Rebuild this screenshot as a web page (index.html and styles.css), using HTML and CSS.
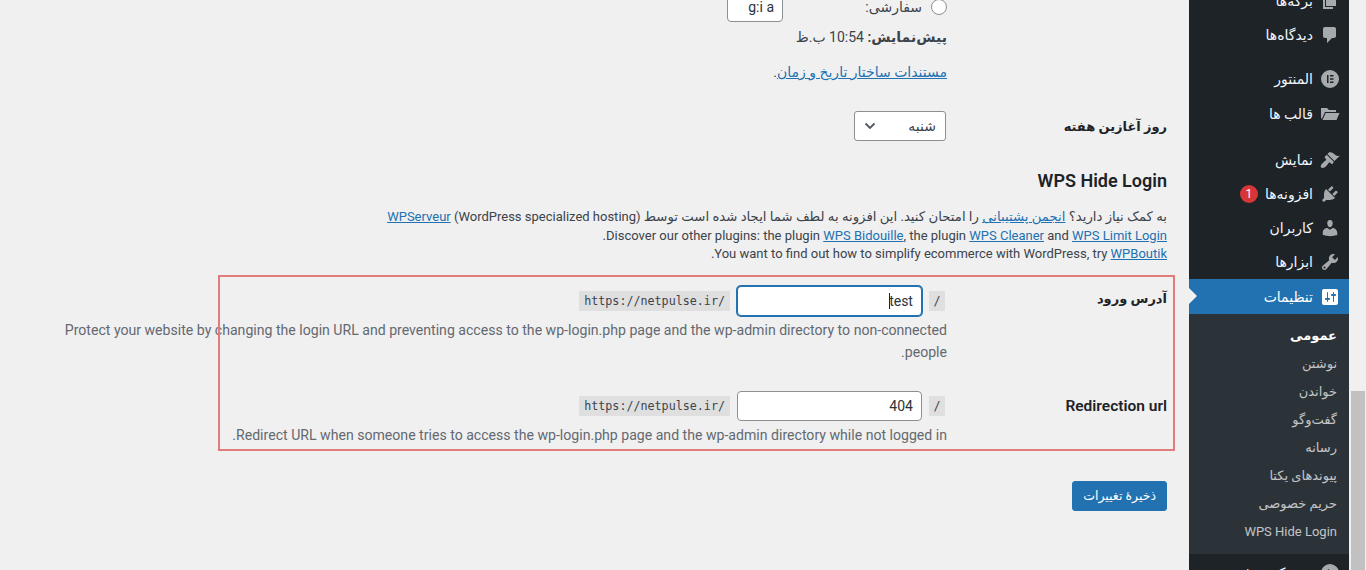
FILE: index.html
```html
<!DOCTYPE html>
<html lang="fa" dir="rtl">
<head>
    <meta charset="UTF-8">
    <title>تنظیمات عمومی</title>
    <link rel="stylesheet" href="styles.css">
</head>
<body>
    <div class="scrollbar"><div class="scrollbar-thumb"></div></div>

    <aside class="sidebar">
        <ul class="menu">
            <li class="menu-item first">
                <svg class="menu-icon" viewBox="0 0 20 20"><path d="M6 15V2h10v13H6zm-1 1h8v2H3V5h2v11z"/></svg>
                <span>برگه‌ها</span>
            </li>
            <li class="menu-item">
                <svg class="menu-icon" viewBox="0 0 20 20"><path d="M5 2h9c1.1 0 2 .9 2 2v7c0 1.1-.9 2-2 2h-2l-5 5v-5H5c-1.1 0-2-.9-2-2V4c0-1.1.9-2 2-2z"/></svg>
                <span>دیدگاه‌ها</span>
            </li>
            <li class="menu-sep"></li>
            <li class="menu-item spaced">
                <svg class="menu-icon" viewBox="0 0 20 20"><path fill-rule="evenodd" d="M10 1a9 9 0 1 0 0 18 9 9 0 0 0 0-18zM7 6h1.5v8H7zm3 0h3.5v1.5H10zm0 3.2h3.5v1.5H10zm0 3.3h3.5V14H10z"/></svg>
                <span>المنتور</span>
            </li>
            <li class="menu-item">
                <svg class="menu-icon" viewBox="0 0 20 20"><path d="M1 4h6l2 2h7v2H5L2 14.5H1zM5.7 9H19.5l-3 7H2.5z"/></svg>
                <span>قالب ها</span>
            </li>
            <li class="menu-sep wide"></li>
            <li class="menu-item">
                <svg class="menu-icon" viewBox="0 0 20 20"><path d="M14.48 11.06L7.41 3.99l1.5-1.5c.5-.56 2.3-.47 3.51.32 1.21.8 1.43 1.28 2.91 2.1 1.18.64 2.45 1.26 4.45.85zm-.71.71L6.7 4.7 4.93 6.47c-.39.39-.39 1.02 0 1.41l1.06 1.06c.39.39.39 1.03 0 1.42-.6.6-1.43 1.11-2.21 1.69-.35.26-.7.53-1.01.84C1.43 13.73 0 16.3 1.2 17.5c1.2 1.2 3.77-.23 5.11-1.57.31-.31.58-.66.84-1.01.58-.78 1.09-1.61 1.69-2.21.39-.39 1.03-.39 1.42 0l1.06 1.06c.39.39 1.02.39 1.41 0z"/></svg>
                <span>نمایش</span>
            </li>
            <li class="menu-item">
                <svg class="menu-icon" viewBox="0 0 20 20"><path d="M13.11 4.36L9.87 7.6 8 5.73l3.24-3.24c.35-.34 1.05-.2 1.56.32.52.51.66 1.21.31 1.55zm-8 1.77l.91-1.12 9.01 9.01-1.19.84c-.71.71-2.63 1.16-3.82 1.16H6.14L4.9 17.26c-.59.59-1.54.59-2.12 0-.59-.58-.59-1.53 0-2.12l1.24-1.24v-3.88c0-1.13.4-3.19 1.09-3.89zm7.26 3.97l3.24-3.24c.34-.35 1.04-.21 1.55.31.52.51.66 1.21.31 1.55l-3.24 3.25z"/></svg>
                <span>افزونه‌ها</span>
                <span class="badge">1</span>
            </li>
            <li class="menu-item">
                <svg class="menu-icon" viewBox="0 0 20 20"><path d="M10 9.25c-2.27 0-2.73-3.44-2.73-3.44C7 4.02 7.82 2 9.97 2c2.16 0 2.98 2.02 2.71 3.81 0 0-.41 3.44-2.68 3.44zm0 2.57L12.72 10c2.39 0 4.52 2.33 4.52 4.53v2.49s-3.65 1.13-7.24 1.13c-3.65 0-7.24-1.13-7.24-1.13v-2.49c0-2.25 1.94-4.48 4.47-4.48z"/></svg>
                <span>کاربران</span>
            </li>
            <li class="menu-item">
                <svg class="menu-icon" viewBox="0 0 20 20"><path d="M16.68 9.77c-1.34 1.34-3.3 1.67-4.95.99l-5.41 6.52c-.99.99-2.59.99-3.58 0s-.99-2.59 0-3.57l6.52-5.42c-.68-1.65-.35-3.61.99-4.95 1.28-1.28 3.12-1.62 4.72-1.06l-2.89 2.89 2.82 2.82 2.86-2.87c.53 1.58.18 3.39-1.08 4.67zM3.81 16.21c.4.39 1.04.39 1.43 0 .4-.4.4-1.04 0-1.43-.39-.4-1.03-.4-1.43 0-.39.39-.39 1.03 0 1.43z"/></svg>
                <span>ابزارها</span>
            </li>
            <li class="menu-item active">
                <svg class="menu-icon" viewBox="0 0 20 20"><path d="M18 16V4c0-1.1-.9-2-2-2H4c-1.1 0-2 .9-2 2v12c0 1.1.9 2 2 2h12c1.1 0 2-.9 2-2zM8 11h1c.55 0 1 .45 1 1s-.45 1-1 1H8v1.5c0 .28-.22.5-.5.5s-.5-.22-.5-.5V13H6c-.55 0-1-.45-1-1s.45-1 1-1h1V5.5c0-.28.22-.5.5-.5s.5.22.5.5V11zm5-2h-1c-.55 0-1-.45-1-1s.45-1 1-1h1V5.5c0-.28.22-.5.5-.5s.5.22.5.5V7h1c.55 0 1 .45 1 1s-.45 1-1 1h-1v5.5c0 .28-.22.5-.5.5s-.5-.22-.5-.5V9z"/></svg>
                <span>تنظیمات</span>
            </li>
            <li class="submenu">
                <a class="current">عمومی</a>
                <a>نوشتن</a>
                <a>خواندن</a>
                <a>گفت‌وگو</a>
                <a>رسانه</a>
                <a>پیوندهای یکتا</a>
                <a>حریم خصوصی</a>
                <a>WPS Hide Login</a>
            </li>
            <li class="menu-item collapse">
                <svg class="menu-icon" viewBox="0 0 20 20"><path fill-rule="evenodd" d="M10 1a9 9 0 1 0 0 18 9 9 0 0 0 0-18zM8 6l6 4-6 4z"/></svg>
                <span>جمع کردن فهرست</span>
            </li>
        </ul>
    </aside>

    <main class="content">
        <!-- date format rows, scrolled partly out of view -->
        <div class="form-row custom-time">
            <div class="row-label"></div>
            <div class="row-field">
                <div class="radio-line">
                    <span class="radio"></span>
                    <span class="radio-text">سفارشی:</span>
                    <input class="text-input small" type="text" value="g:i a">
                </div>
                <p class="preview"><strong>پیش‌نمایش:</strong> 10:54 ب.ظ</p>
                <p class="doc-link"><a href="#">مستندات ساختار تاریخ و زمان</a>.</p>
            </div>
        </div>

        <div class="form-row week-row">
            <div class="row-label">روز آغازین هفته</div>
            <div class="row-field">
                <div class="select-box">
                    <span>شنبه</span>
                    <svg class="chevron" viewBox="0 0 12 8"><path d="M1.5 1.5L6 6l4.5-4.5" fill="none" stroke="#50575e" stroke-width="1.8"/></svg>
                </div>
            </div>
        </div>

        <h2 class="section-title">WPS Hide Login</h2>
        <p class="section-intro">
            <span class="intro-fa">به کمک نیاز دارید؟ <a href="#">انجمن پشتیبانی</a> را امتحان کنید. این افزونه به لطف شما ایجاد شده است توسط</span> (WordPress specialized hosting) <a href="#">WPServeur</a><br>
            Discover our other plugins: the plugin <a href="#">WPS Bidouille</a>, the plugin <a href="#">WPS Cleaner</a> and <a href="#">WPS Limit Login</a>.<br>
            You want to find out how to simplify ecommerce with WordPress, try <a href="#">WPBoutik</a>.
        </p>

        <div class="form-row login-row">
            <div class="row-label">آدرس ورود</div>
            <div class="row-field">
                <div class="url-line">
                    <code class="slash">/</code>
                    <div class="input-wrap">
                        <input class="text-input focused" type="text" value="test">
                        <span class="caret"></span>
                    </div>
                    <code class="base-url">https://netpulse.ir/</code>
                </div>
                <p class="description">Protect your website by changing the login URL and preventing access to the wp-login.php page and the wp-admin directory to non-connected people.</p>
            </div>
        </div>

        <div class="form-row redirect-row">
            <div class="row-label">Redirection url</div>
            <div class="row-field">
                <div class="url-line">
                    <code class="slash">/</code>
                    <div class="input-wrap">
                        <input class="text-input" type="text" value="404">
                    </div>
                    <code class="base-url">https://netpulse.ir/</code>
                </div>
                <p class="description">Redirect URL when someone tries to access the wp-login.php page and the wp-admin directory while not logged in.</p>
            </div>
        </div>

        <button class="save-button">ذخیرهٔ تغییرات</button>
    </main>

    <!-- red box drawn over the screenshot -->
    <div class="highlight-box"></div>
</body>
</html>
```

FILE: styles.css
```css
* {
    box-sizing: border-box;
}

html, body {
    height: 570px;
    margin: 0;
    overflow: hidden;
}

body {
    display: flex;
    flex-direction: row;
    background: #f0f0f1;
    color: #3c434a;
    font-family: Roboto, "DejaVu Sans", sans-serif;
    font-size: 14px;
}

/* scrollbar on the far right */
.scrollbar {
    width: 17px;
    flex: none;
    padding-top: 391px;
    padding-right: 1px;
    padding-left: 2px;
}

.scrollbar-thumb {
    height: 179px;
    background: #c1c1c1;
}

/* admin menu */
.sidebar {
    width: 160px;
    flex: none;
    background: #1d2327;
    color: #f0f6fc;
    overflow: hidden;
}

.menu {
    list-style: none;
    margin: 0;
    padding: 0;
    font-size: 14px;
}

.menu-item {
    display: flex;
    align-items: center;
    height: 34px;
    padding-right: 9px;
    gap: 7px;
}

.menu-item.first {
    margin-top: -16px;
}

.menu-item.spaced {
    margin-bottom: 1px;
}

.menu-item.collapse {
    margin-top: 2px;
}

.menu-icon {
    width: 20px;
    height: 20px;
    flex: none;
    fill: #a7aaad;
}

.menu-sep {
    height: 10px;
}

.menu-sep.wide {
    height: 12px;
}

.badge {
    width: 18px;
    height: 18px;
    border-radius: 50%;
    background: #d63638;
    color: #fff;
    font-size: 12px;
    line-height: 18px;
    text-align: center;
}

.menu-item.active {
    position: relative;
    height: 35px;
    background: #2271b1;
    color: #fff;
}

.menu-item.active .menu-icon {
    fill: #fff;
}

.menu-item.active::after {
    content: "";
    position: absolute;
    left: 0;
    top: 9px;
    border: 8px solid transparent;
    border-left-color: #f0f0f1;
}

.submenu {
    background: #2c3338;
    padding: 8px 12px 8px 0;
}

.submenu a {
    display: block;
    height: 28px;
    line-height: 28px;
    color: #c3c4c7;
    font-size: 13px;
    text-decoration: none;
}

.submenu a.current {
    color: #fff;
    font-weight: bold;
}

/* main settings column */
.content {
    flex: 1;
    padding: 0 22px 0 40px;
}

.form-row {
    display: flex;
}

.row-label {
    width: 220px;
    flex: none;
    color: #1d2327;
    font-size: 13px;
    font-weight: 600;
}

.row-field {
    flex: 1;
}

.custom-time {
    margin-top: -8px;
}

.radio-line {
    display: flex;
    align-items: center;
    height: 30px;
}

.radio {
    width: 16px;
    height: 16px;
    border: 1px solid #8c8f94;
    border-radius: 50%;
    background: #fff;
}

.radio-text {
    width: 139px;
    margin-right: 9px;
}

.text-input {
    width: 185px;
    height: 30px;
    padding: 0 8px;
    border: 1px solid #8c8f94;
    border-radius: 4px;
    background: #fff;
    color: #2c3338;
    font-family: inherit;
    font-size: 14px;
    outline: none;
}

.text-input.small {
    width: 56px;
}

.text-input.focused {
    border-color: #2271b1;
    box-shadow: 0 0 0 1px #2271b1;
}

.input-wrap {
    position: relative;
    width: 185px;
}

.input-wrap .text-input {
    display: block;
}

/* the text cursor sitting in front of the typed value */
.caret {
    position: absolute;
    right: 32px;
    top: 7px;
    width: 1px;
    height: 16px;
    background: #1d2327;
}

.preview {
    margin: 5px 0 0;
    line-height: 20px;
}

.preview strong {
    font-weight: 600;
}

.doc-link {
    margin: 15px 0 0;
    line-height: 20px;
}

a {
    color: #2271b1;
    text-decoration: underline;
}

.week-row {
    margin-top: 29px;
    align-items: center;
}

.select-box {
    display: flex;
    align-items: center;
    justify-content: space-between;
    width: 92px;
    height: 30px;
    margin-right: 1px;
    padding: 0 9px;
    border: 1px solid #8c8f94;
    border-radius: 3px;
    background: #fff;
}

.chevron {
    width: 12px;
    height: 8px;
}

.section-title {
    margin: 30px 0 0;
    color: #1d2327;
    font-size: 18px;
    font-weight: 600;
    line-height: 20px;
}

.section-intro {
    margin: 17px 0 0;
    font-size: 13px;
    line-height: 18.5px;
}

.intro-fa {
    font-size: 13.25px;
}

.login-row {
    margin-top: 22px;
}

.login-row .row-label {
    padding-top: 5px;
}

.redirect-row .row-label {
    padding-top: 6px;
    font-size: 15.5px;
}

.url-line {
    display: flex;
    align-items: center;
    gap: 7px;
    padding-right: 2px;
}

code {
    display: block;
    padding: 3px 5px;
    background: rgba(0, 0, 0, 0.07);
    color: #3c434a;
    font-family: "DejaVu Sans Mono", monospace;
    font-size: 11.7px;
    line-height: 14px;
    direction: ltr;
}

code.slash {
    padding: 3px 4.5px;
}

.description {
    margin: 3px 0 0;
    color: #646970;
    font-size: 14.1px;
    line-height: 22px;
}

.redirect-row {
    margin-top: 28px;
}

.save-button {
    display: block;
    margin-top: 35px;
    height: 30px;
    padding: 0 10px;
    border: 1px solid #2271b1;
    border-radius: 3px;
    background: #2271b1;
    color: #fff;
    font-family: inherit;
    font-size: 12.5px;
}

.highlight-box {
    position: absolute;
    left: 218px;
    top: 275px;
    width: 957px;
    height: 176px;
    border: 2px solid #e27c7c;
}
```
